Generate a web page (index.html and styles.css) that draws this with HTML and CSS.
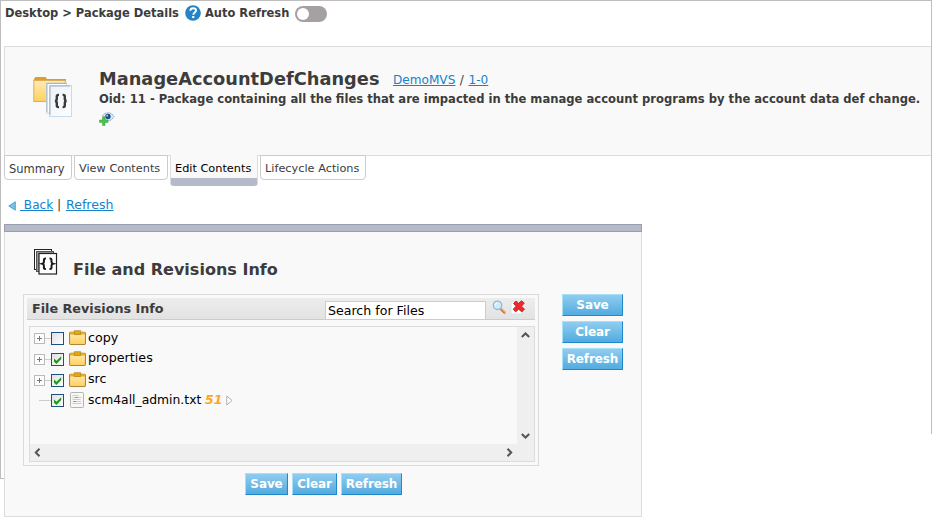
FILE: index.html
```html
<!DOCTYPE html>
<html lang="en">
<head>
<meta charset="utf-8">
<title>Package Details</title>
<link rel="stylesheet" href="styles.css">
</head>
<body>
<svg width="0" height="0" class="defs">
  <defs>
    <linearGradient id="gold" x1="0" y1="0" x2="0" y2="1"><stop offset="0" stop-color="#ffeab8"/><stop offset="1" stop-color="#ffd15c"/></linearGradient>
    <linearGradient id="sheet" x1="0" y1="0" x2="1" y2="1"><stop offset="0" stop-color="#eaf2f9"/><stop offset="1" stop-color="#ffffff"/></linearGradient>
    <symbol id="folder" viewBox="0 0 16 14">
      <rect x=".5" y="2" width="15" height="11.5" rx="1" fill="url(#gold)" stroke="#ad8638"/>
      <path d="M1 3.2h14" stroke="#f0ae10" stroke-width="2"/>
      <path d="M5 .6h6v3.600h-6z" fill="#e8a800" stroke="#ad8638" stroke-width=".7"/>
    </symbol>
    <symbol id="check" viewBox="0 0 13 13">
      <path d="M3 5.500v3.200l2.500 2.200L10.200 6V3.200L5.500 7.800z" fill="#1c9a20"/>
    </symbol>
  </defs>
</svg>

<div class="topbar">
  <span class="crumbs">Desktop &gt; Package Details</span>
  <svg class="help" width="16" height="16" viewBox="0 0 16 16"><circle cx="8" cy="8" r="7.800" fill="#2484c6"/><path d="M5.300 5.800C5.400 4 6.500 3.300 8.100 3.300s2.900.8 2.900 2.300c0 2-2.700 2-2.700 4.200" fill="none" stroke="#fff" stroke-width="1.900"/><rect x="7.200" y="11" width="2.100" height="2.100" fill="#fff"/></svg>
  <span class="auto">Auto Refresh</span>
  <span class="toggle"><span class="knob"></span></span>
</div>

<div class="header">
  <svg class="pkg" width="41" height="42" viewBox="0 0 41 42">
    <path d="M1 3l1.500-2h10l1.500 2h19v4H1z" fill="#dc9f2b"/>
    <rect x=".8" y="4.500" width="31.500" height="21" fill="url(#gold)" stroke="#e0ad50"/>
    <rect x="13.500" y="7" width="20" height="30" fill="#fff" stroke="#c3d5e6"/>
    <path d="M14 36V7.500h19" fill="none" stroke="#a9b3ba"/>
    <rect x="16.500" y="9.500" width="22" height="31" fill="url(#sheet)" stroke="#c6dcee"/>
    <path d="M17 39V10h20" fill="none" stroke="#9fb0c6"/>
    <path d="M26 18.900h-.6c-1.200 0-1.600.5-1.600 1.600v2.300c0 1.300-.5 2-1.700 2.200 1.200.2 1.700.9 1.700 2.200v2.300c0 1.100.4 1.600 1.600 1.600h.6M29.600 18.900h.6c1.200 0 1.600.5 1.600 1.600v2.300c0 1.300.5 2 1.700 2.200-1.200.2-1.700.9-1.700 2.200v2.300c0 1.100-.4 1.600-1.600 1.600h-.6" fill="none" stroke="#3b3b3b" stroke-width="2.400"/>
  </svg>
  <div class="info">
    <div class="titleline"><h1>ManageAccountDefChanges</h1><span class="path"><a>DemoMVS</a> / <a>1-0</a></span></div>
    <div class="desc">Oid: 11 - Package containing all the files that are impacted in the manage account programs by the account data def change.</div>
    <svg class="watch" width="16" height="14" viewBox="0 0 16 14">
      <path d="M3.500 4C5 1.500 7 .8 9.200 .8c2.600 0 4.500 1.500 5.800 3.700-1.500 2.500-3.500 4-5.500 4.500-2-.8-4-2.500-6-5z" fill="#dce9f5" stroke="#8eabc6" stroke-dasharray="2 .6"/>
      <circle cx="9" cy="4.500" r="2.700" fill="#1f4f8c"/><circle cx="8.200" cy="3.700" r=".9" fill="#a8d0f0"/>
      <path d="M3.500 4.800h2.500V8h3v2.500H6v3H3.500v-3H.500V8h3z" fill="#4cc04c" stroke="#2fa83a" stroke-width=".5"/>
    </svg>
  </div>
</div>

<div class="tabs">
  <div class="tab summary">Summary</div>
  <div class="tab view">View Contents</div>
  <div class="tab edit active">Edit Contents</div>
  <div class="tab life">Lifecycle Actions</div>
</div>

<div class="links">
  <svg width="8" height="10" viewBox="0 0 8 10"><path d="M.8 5L7.300 .8v8.400z" fill="#7cc0e6" stroke="#3f9cd0" stroke-width=".9"/></svg>
  <a class="back">&nbsp;Back</a><span class="bar">|</span><a class="ref">Refresh</a>
</div>

<div class="panel">
  <div class="stripe"></div>
  <div class="panelhead">
    <svg width="25" height="28" viewBox="0 0 25 28">
      <rect x="1.500" y="1.500" width="17" height="20" fill="#dadada" stroke="#222"/>
      <path d="M2.500 21V2.500H18" fill="none" stroke="#fff"/>
      <rect x="3.500" y="3.500" width="17" height="20" fill="#999" stroke="#555"/>
      <rect x="6" y="5.500" width="17.500" height="20.500" fill="#fff" stroke="#222" stroke-width="1.200"/>
      <path d="M12.900 10.500h-.5c-1.100 0-1.500.5-1.500 1.500v1.700c0 1.200-.4 1.700-1.500 2 1.100.3 1.500.8 1.500 2v1.700c0 1 .4 1.500 1.500 1.500h.5M16.500 10.500h.5c1.100 0 1.500.5 1.500 1.500v1.700c0 1.200.4 1.700 1.500 2-1.100.3-1.500.8-1.500 2v1.700c0 1-.4 1.500-1.500 1.500h-.5" fill="none" stroke="#181818" stroke-width="2"/>
    </svg>
    <h2>File and Revisions Info</h2>
  </div>
  <div class="content">
    <div class="filebox">
      <div class="filehead">
        <h3>File Revisions Info</h3>
        <input class="search" value="Search for Files">
        <svg class="mag" width="15" height="15" viewBox="0 0 15 15"><path d="M8.800 8.800l4.400 4.400" stroke="#e6483a" stroke-width="2.400"/><path d="M9.300 8.600l4.300 4.300" stroke="#ffc83c" stroke-width="1.200"/><circle cx="5.500" cy="5.300" r="4.200" fill="#d0ecfb" stroke="#8fb8d6" stroke-width="1.300"/><path d="M3.300 5a2.300 2.300 0 0 1 2-2.100" fill="none" stroke="#fff"/></svg>
        <svg class="del" width="16" height="15" viewBox="0 0 16 15"><path d="M1 1.500h11v12.500H1z" fill="#fff" stroke="#c4e2f2" stroke-width=".8"/><path d="M3.500 3.300L6 1l2.600 2.300L11.500 .8l2.800 2.300-2.800 3.100 3 3-2.600 2.700-3.200-2.600-3.200 2.600-2.300-2.700L6 6.200z" fill="#f02828" stroke="#b81c1c" stroke-width=".8"/></svg>
      </div>
      <div class="treebox">
        <div class="tree">
          <div class="row"><span class="plus"></span><span class="dash"></span><span class="cb"></span><svg class="fold" width="17" height="15"><use href="#folder"/></svg><span class="name">copy</span></div>
          <div class="row"><span class="plus"></span><span class="dash"></span><span class="cb"><svg width="11" height="11" viewBox="1 1 11 11"><use href="#check" width="13" height="13"/></svg></span><svg class="fold" width="17" height="15"><use href="#folder"/></svg><span class="name up">properties</span></div>
          <div class="row"><span class="plus"></span><span class="dash"></span><span class="cb"><svg width="11" height="11" viewBox="1 1 11 11"><use href="#check" width="13" height="13"/></svg></span><svg class="fold" width="17" height="15"><use href="#folder"/></svg><span class="name up">src</span></div>
          <div class="row"><span class="dash long"></span><span class="cb"><svg width="11" height="11" viewBox="1 1 11 11"><use href="#check" width="13" height="13"/></svg></span>
            <svg class="doc" width="14" height="16" viewBox="0 0 14 16"><rect x=".5" y=".5" width="13" height="15" rx=".8" fill="#f7f7f5" stroke="#b5b5ad"/><path d="M2.500 3.500h6M2.500 5.500h9M2.500 7.500h8M5 9.500h6M2.500 11.500h9" stroke="#cdcdcd"/><path d="M5 5.500h3M3 9.500h3" stroke="#999"/></svg>
            <span class="name file">scm4all_admin.txt</span><span class="rev">51</span>
            <svg class="tri" width="7" height="11" viewBox="0 0 7 11"><path d="M.8 1v9L6 5.500z" fill="#fff" stroke="#b0b0b0"/></svg></div>
        </div>
        <div class="vscroll">
          <svg width="9" height="6" viewBox="0 0 9 6"><path d="M.8 5l3.700-3.500L8.200 5" fill="none" stroke="#555" stroke-width="2"/></svg>
          <svg width="9" height="6" viewBox="0 0 9 6"><path d="M.8 1l3.700 3.500L8.200 1" fill="none" stroke="#555" stroke-width="2"/></svg>
        </div>
        <div class="hscroll">
          <svg width="7" height="9" viewBox="0 0 7 9"><path d="M5.500 .8L1.800 4.500l3.700 3.700" fill="none" stroke="#555" stroke-width="2"/></svg>
          <svg width="7" height="9" viewBox="0 0 7 9"><path d="M1.500 .8l3.700 3.700-3.700 3.700" fill="none" stroke="#555" stroke-width="2"/></svg>
        </div>
      </div>
    </div>
    <div class="side"><button>Save</button><button>Clear</button><button>Refresh</button></div>
  </div>
  <div class="bottom"><button class="s">Save</button><button class="c">Clear</button><button class="r">Refresh</button></div>
</div>
</body>
</html>
```
FILE: styles.css
```css
* { box-sizing: border-box; }
html { background: #fff; }
body {
  margin: 0;
  width: 932px;
  height: 525px;
  overflow: hidden;
  padding-left: 4px;
  font-family: "DejaVu Sans", Verdana, sans-serif;
  font-size: 12.5px;
  color: #3c3c3c;
  background:
    linear-gradient(#bdbdbd, #bdbdbd) 0 0 / 932px 1px no-repeat,
    linear-gradient(#bdbdbd, #bdbdbd) 0 0 / 1px 479px no-repeat,
    linear-gradient(#bdbdbd, #bdbdbd) 931px 0 / 1px 434px no-repeat,
    linear-gradient(#bdbdbd, #bdbdbd) 0 478px / 5px 1px no-repeat;
}
svg { display: block; flex: none; }
.defs { position: absolute; }
h1, h2, h3 { margin: 0; font-weight: bold; white-space: nowrap; }
a { color: #1583cb; text-decoration: underline; }

.topbar { display: flex; height: 46px; padding-top: 5px; font-weight: bold; font-size: 11.46px; line-height: 17px; white-space: nowrap; }
.crumbs { width: 181px; padding-left: 1px; }
.auto { width: 94px; padding-left: 4px; }
.toggle { display: block; width: 32px; height: 16px; margin-top: 1px; border-radius: 8px; background: #a5a0a1; padding: 2px; }
.knob { display: block; width: 12px; height: 12px; border-radius: 50%; background: #fff; }

.header { display: flex; width: 927px; height: 110px; border: 1px solid #dcdcdc; border-right: 0; background: #f9f9f9; }
.pkg { margin: 29px 0 0 28px; }
.info { margin: 21px 0 0 25px; }
.titleline { display: flex; height: 22px; line-height: 22px; }
h1 { width: 294px; font-size: 17.76px; letter-spacing: .03px; }
.path { font-size: 12.1px; line-height: 25px; white-space: nowrap; word-spacing: .7px; }
.desc { height: 17px; padding-top: 1px; font-size: 11.58px; line-height: 16px; font-weight: bold; white-space: nowrap; }
.watch { margin-top: 5px; }

.tabs { display: flex; align-items: flex-start; gap: 2px; height: 31px; margin-top: -1px; position: relative; }
.tab { height: 25px; padding: 3px 0 0 4px; border: 1px solid #ccc; border-radius: 0 0 4px 4px; background: #fff; font-size: 11.3px; line-height: 20px; white-space: nowrap; }
.summary { width: 68px; font-size: 11.5px; }
.view { width: 94px; }
.edit { width: 88px; }
.life { width: 106px; }
.active { height: 31px; padding-top: 4px; border-color: #dcdcdc; border-top: 0; border-bottom: 8px solid #b4bac8; background: #f9f9f9; color: #000; }

.links { display: flex; height: 38px; padding: 10px 0 0 4px; font-size: 12.6px; line-height: 18px; white-space: nowrap; }
.links svg { margin-top: 5px; }
.back { width: 33px; margin-left: 4px; font-size: 12.1px; }
.bar { width: 8px; margin-left: 4px; }
.ref { margin-left: 1px; }

.panel { width: 638px; height: 293px; border: 1px solid #dcdcdc; border-top: 0; background: #f9f9f9; }
.stripe { height: 8px; margin: 0 -1px; border: 1px solid #9a9fad; background: #b4bac8; }
.panelhead { display: flex; height: 62px; padding: 16px 0 0 28px; }
h2 { margin: 10px 0 0 15px; font-size: 16.05px; line-height: 24px; }
.content { display: flex; padding-left: 18px; gap: 23px; }
.filebox { width: 516px; height: 172px; padding: 3px; border: 1px solid #dcdcdc; }
.filehead { display: flex; height: 22px; background: linear-gradient(#ededed, #e2e2e2); border-bottom: 1px solid #ccc; }
h3 { width: 298px; padding-left: 5px; font-size: 12.75px; line-height: 21px; }
.search { width: 161px; height: 18px; margin-top: 3px; padding: 0 0 1px 2px; border: 1px solid #ccc; border-bottom: 0; border-radius: 0; background: #fff; color: #000; font: 12.6px/16px "DejaVu Sans", Verdana, sans-serif; outline: 0; }
.mag { margin: 2px 0 0 6px; }
.del { margin: 2px 0 0 3px; }
.treebox { display: grid; grid-template-columns: 1fr 17px; grid-template-rows: 1fr 17px; width: 506px; height: 136px; margin: 6px 0 0 2px; border: 1px solid #dcdcdc; }
.tree { color: #000; }
.row { display: flex; align-items: center; height: 21px; padding-left: 4px; }
.row:last-child { height: 20px; }
.plus { width: 11px; height: 11px; margin-top: 1px; border: 1px solid #bbb; background: linear-gradient(#777, #777) 2px 4px / 5px 1px no-repeat, linear-gradient(#777, #777) 4px 2px / 1px 5px no-repeat, #fcfcfc; }
.dash { width: 6px; height: 1px; margin-top: 1px; background: #ccc; }
.long { width: 12px; margin-left: 5px; }
.cb { width: 13px; height: 13px; margin-top: 1px; border: 1px solid #1d5180; background: linear-gradient(135deg, #e2dfe2, #fff); }
.fold { margin: -1px 0 0 5px; }
.name { margin: 0 0 0 2px; font-size: 12.7px; white-space: nowrap; }
.up { margin-top: -2px; }
.doc { margin-left: 6px; }
.file { width: 117px; margin: -1px 0 0 4px; font-size: 12.35px; }
.rev { width: 21px; margin-top: -1px; color: #ffa51e; font-weight: bold; font-style: italic; }
.vscroll { display: flex; flex-direction: column; justify-content: space-between; align-items: center; padding: 5px 0; background: #efefef; }
.hscroll { grid-column: 1 / 3; display: flex; justify-content: space-between; align-items: center; padding: 0 21px 0 4px; background: #efefef; }
button { width: 61px; height: 22px; padding: 0 0 1px; border: 1px solid; border-color: #a8e0f8 #2088cc #2088cc #a8e0f8; border-radius: 0; background: linear-gradient(#90cdf0, #52abdf); color: #fff; font: bold 12px/19px "DejaVu Sans", Verdana, sans-serif; letter-spacing: -.1px; }
.side { display: flex; flex-direction: column; gap: 5px; }
.side button { padding-bottom: 0; }
.bottom { display: flex; gap: 4px; margin: 7px 0 0 240px; }
.s { width: 43px; }
.c { width: 45px; }
.bottom button { padding: 0; }
```
